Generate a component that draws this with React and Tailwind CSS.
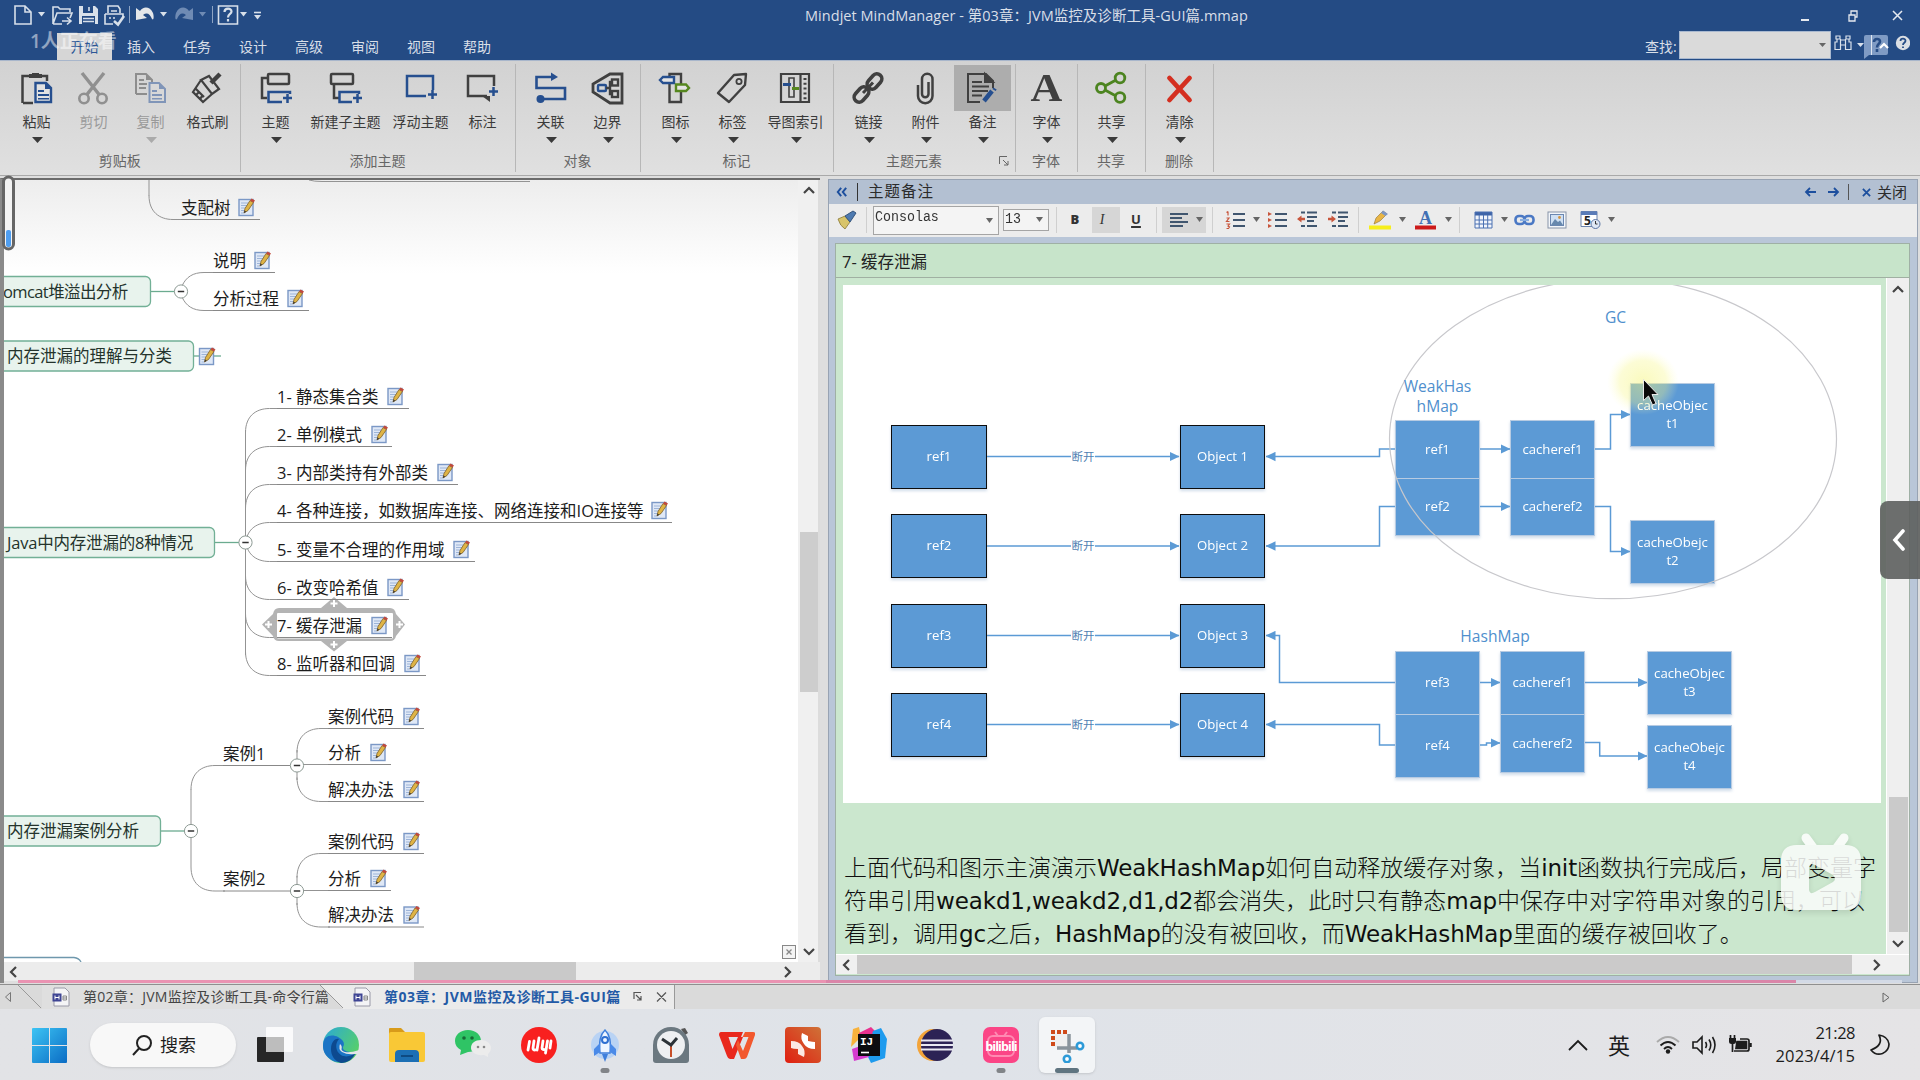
import React from "react";

const UI = "font-['Open_Sans','Noto_Sans_CJK_SC',sans-serif]";

/* ---------- small shared pieces ---------- */

function Caret({ className = "text-[#444]", w = 8, h = 5 }) {
  return (
    <svg width={w} height={h} viewBox="0 0 8 5" preserveAspectRatio="none" className={"shrink-0 " + className}>
      <path d="M0 0H8L4 5Z" fill="currentColor" />
    </svg>
  );
}

function Chevron({ d, className = "text-[#444]" }) {
  const paths = { up: "M1 8L6 3L11 8", down: "M1 4L6 9L11 4", left: "M8 1L3 6L8 11", right: "M4 1L9 6L4 11" };
  return (
    <svg width="12" height="12" viewBox="0 0 12 12" className={"shrink-0 " + className}>
      <path d={paths[d]} fill="none" stroke="currentColor" strokeWidth="2.2" />
    </svg>
  );
}

/* ---------- title bar ---------- */

function QuickAccess() {
  return (
    <svg width="280" height="30" viewBox="0 0 280 30" className="shrink-0" fill="none" stroke="#d8e0ea" strokeWidth="1.6">
      <path d="M15 5H25L31 11V23H15ZM25 5V11H31" />
      <path d="M38 11H45L41.500 15.500Z" fill="#d8e0ea" stroke="none" />
      <path d="M53 23V6H58L60 8H70V11M53 23L57 12H72L70 17M53 23H62M62 20H70M67 16.500L71 20L67 23.500" />
      <path d="M79 5H95L98 8V23H79Z" fill="#d8e0ea" stroke="none" />
      <path d="M83 5H93V12H83ZM82 15H95V23H82Z" fill="#244b84" stroke="none" />
      <path d="M89 6V10M83 17.500H94M83 20.500H94" />
      <path d="M108 12V5H118L120 8V12M105 13H123V17M105 13V23H113M111 10H117M109 17H111M113 17H115" />
      <path d="M114 20L118 23.500L124 15" strokeWidth="2.600" />
      <path d="M129.500 5V22M212.500 5V22" stroke="#8ea4c4" strokeWidth="1" />
      <path d="M136 7V19L147 17L143 14C147 11 150 13 152 18C154 20 154 15 153 12C150 5 143 5 140 10Z" fill="#e4e7ea" stroke="none" />
      <path d="M160 11H167L163.500 15.500Z" fill="#d8e0ea" stroke="none" />
      <path d="M193 7V19L182 17L186 14C182 11 179 13 177 18C175 20 175 15 176 12C179 5 186 5 189 10Z" fill="#6f8bb4" stroke="none" />
      <path d="M199 11H206L202.500 15.500Z" fill="#6f8bb4" stroke="none" />
      <path d="M218.500 5H237.500V23H218.500Z" />
      <path d="M224.500 11C224.500 6.500 231.500 6.500 231.500 10.500C231.500 13 228 13 228 16.500M228 18V20.500" strokeWidth="2.200" />
      <path d="M240 11H247L243.500 15.500Z" fill="#d8e0ea" stroke="none" />
      <path d="M254 11.500H261" />
      <path d="M254 14H261L257.500 18.500Z" fill="#d8e0ea" stroke="none" />
    </svg>
  );
}

function Header() {
  const tabs = ["插入", "任务", "设计", "高级", "审阅", "视图", "帮助"];
  return (
    <header className="relative flex h-[60px] shrink-0 flex-col bg-[#244b84] text-[#d9dfe8]">
      <div className="flex h-[31px] items-center">
        <QuickAccess />
        <div className="ml-[525px] whitespace-nowrap text-[14.500px] tracking-[0.040px]">
          Mindjet MindManager - 第03章：JVM监控及诊断工具-GUI篇.mmap
        </div>
        <div className="ml-auto flex items-center gap-[38px] pr-[17px]">
          <svg width="10" height="12" viewBox="0 0 10 12"><path d="M1 10H9" stroke="#e6eaf0" strokeWidth="2" /></svg>
          <svg width="10" height="12" viewBox="0 0 10 12" className="-mr-[4px]" fill="none" stroke="#e6eaf0" strokeWidth="1.300"><path d="M1 5H7V11H1ZM3 5V1H9V7H7" /></svg>
          <svg width="11" height="11" viewBox="0 0 11 11"><path d="M1 1L10 10M10 1L1 10" stroke="#e6eaf0" strokeWidth="1.500" /></svg>
        </div>
      </div>
      <div className="flex h-[29px] text-[14px] leading-[31px]">
        <div className="mt-[2px] ml-[57px] w-[55px] bg-[#d6d6d6] text-center leading-[27px] text-[#2c5796]">开始</div>
        <div className="ml-[1px] flex">
          {tabs.map((t) => (
            <div key={t} className="w-[56px] text-center">{t}</div>
          ))}
        </div>
        <div className="ml-auto flex pr-[10px]">
          <div className="w-[34px]">查找:</div>
          <div className="flex h-[28px] w-[152px] items-center justify-end border border-[#a9b9d0] bg-[#dadada] pr-[4px]">
            <Caret w={7} h={4} className="text-[#666]" />
          </div>
          <svg width="79" height="29" viewBox="0 0 79 29" fill="none" stroke="#d9e1ec">
            <path d="M5 5H9V8H5ZM15 5H19V8H15ZM6 8V11H4V18.500H9.500V8M18 8V11H20V18.500H14.500V8M9.500 9H14.500M9.500 14H14.500" strokeWidth="1.200" />
            <path d="M26 12H33L29.500 16Z" fill="#d9e1ec" stroke="none" />
            <path d="M33 6Q33 4 35 4H55Q57 4 57 6V22Q57 24 55 24H38L33 28Z" fill="#7f9bc4" stroke="none" />
            <path d="M40.500 4V24" stroke="#dfe6f0" strokeWidth="1" />
            <path d="M43 11C43 7 49 7 49 10.500C49 13 46 13 46 16.500M46 18V21" stroke="#274d86" strokeWidth="2.600" />
            <path d="M49 17L53 13L57 17" stroke="#fff" strokeWidth="2.200" />
            <circle cx="72" cy="12" r="7.200" fill="#dbdfe4" stroke="none" />
            <path d="M69.500 10C69.500 7 74.500 7 74.500 9.800C74.500 12 72 11.500 72 14M72 15.500V17" stroke="#274d86" strokeWidth="1.800" />
          </svg>
        </div>
      </div>
      <div className="absolute top-[28px] left-[30px] text-[19px] leading-[26px] font-semibold text-white/50">1人正在看</div>
    </header>
  );
}

/* ---------- ribbon ---------- */

const K = "#404040";
const B = "#264f8f";
const ICONS = {
  paste: (<g><path d="M5 33H15M4.500 33V6H29V11" fill="none" stroke={K} strokeWidth="2.500" /><path d="M11 8V4H14V3H21V4H24V8Z" fill={K} /><path d="M17.500 13H28L33 18V32H17.500Z" fill="#e2e2e2" stroke={B} strokeWidth="2.400" /><path d="M27 12L34 19H27ZM20 20H26V22H20ZM20 24H31V26H20ZM20 28H31V29.500H20Z" fill={B} /></g>),
  cut: (<g fill="none" stroke="#909090" strokeWidth="2.600"><circle cx="9" cy="28.500" r="4.700" /><circle cx="27" cy="28.500" r="4.700" /><path d="M7 3L24.500 25M29 3L11.500 25" strokeWidth="3.400" /></g>),
  copy: (<g><path d="M4 24V4H14L20 10V12M4 24H15" fill="none" stroke="#8d8d8d" strokeWidth="2" /><path d="M14 4L20 10H14ZM7 9H12V11H7ZM7 13H15V15H7ZM7 17H14V19H7Z" fill="#8d8d8d" /><path d="M17.500 13H27L33 19V32H17.500Z" fill="#d8d8d8" stroke="#8095b8" strokeWidth="2" /><path d="M27 13L33 19H27ZM20 20H25V22H20ZM20 24H30V26H20ZM20 28H30V29.500H20Z" fill="#8095b8" /></g>),
  brush: (<g fill="none" stroke={K} strokeWidth="2.200"><path d="M12 10L20 6L30 19L23 24ZM12 10L4 22L14 32L23 24M7 19L15 27M11 29L14 25M7 25L10 22" /><path d="M22 13L31 4" strokeWidth="4.500" /></g>),
  topic: (<g fill="none" strokeWidth="2.500"><rect x="11" y="4" width="21" height="10" rx="1" stroke={K} /><path d="M11 8H5V28H10" stroke={K} /><path d="M25 32H11.500V22H33V24M26 28H35M30.500 24V33" stroke={B} /></g>),
  sub: (<g fill="none" strokeWidth="2.500"><rect x="4" y="4" width="22" height="10" rx="1" stroke={K} /><path d="M7 14V28H12" stroke={K} /><path d="M25 32H12.500V22H32V24M26 28H35M30.500 24V33" stroke={B} /></g>),
  float: (<g fill="none" stroke={B} strokeWidth="2.500"><path d="M24 26H5V6H31V20M26 24.500H35M30.500 20V29" /></g>),
  callout: (<g fill="none" strokeWidth="2.500"><path d="M23 26H4V6H30V16" stroke={K} /><path d="M18 26H26V32Z" fill={K} /><path d="M25 21.500H34M29.500 17V26" stroke={B} /></g>),
  relate: (<g fill="none" stroke={B} strokeWidth="2.600"><path d="M20 7H4.500V18H33V29H9" /><path d="M19 2.500L26 7L19 11Z" fill={B} stroke="none" /><circle cx="8.500" cy="29" r="4" fill={B} stroke="none" /></g>),
  bound: (<g fill="none" strokeWidth="2.400"><path d="M33 4H21L4 14V22L21 33H33Z" stroke={K} strokeWidth="2.800" /><rect x="9" y="15" width="8" height="6" rx="1" stroke={B} /><path d="M17 18H21M21 18V12H23M21 18V24H23" stroke={K} /><rect x="23" y="9.500" width="6" height="6" stroke={K} /><rect x="23" y="21" width="6" height="6" stroke={K} /></g>),
  marker: (<g fill="#e4e4e4" strokeWidth="2.400"><path d="M12.500 4H24V32H12.500Z" fill="none" stroke={K} /><path d="M3 10L6 7H17V13H6Z" stroke={B} /><path d="M32 18L29 14.500H19V21H29Z" stroke="#56871f" /></g>),
  tag: (<g fill="none" stroke={K} strokeWidth="2.400"><path d="M4 23L20 5L32 4L31 15L15 32Z" strokeLinejoin="round" /><circle cx="25" cy="11.500" r="2.600" strokeWidth="1.800" /></g>),
  index: (<g fill="none" stroke={K} strokeWidth="2.200"><path d="M4 4H32V32H4ZM23.500 4V32" /><path d="M28 8V30" strokeWidth="3" strokeDasharray="2 2.800" /><path d="M12 8H17V27H12Z" strokeWidth="1.600" /><path d="M6 13H14V16H6Z" fill={B} stroke="none" /><path d="M15 17H22V20H15Z" fill="#56871f" stroke="none" /></g>),
  link: (<g fill="none" stroke={K} strokeWidth="3.600"><rect x="16" y="6.500" width="17" height="10" rx="5" transform="rotate(-48 24.500 11.500)" /><rect x="3" y="19.500" width="17" height="10" rx="5" transform="rotate(-48 11.500 24.500)" /><path d="M13 23L23 12.500" strokeWidth="3" /></g>),
  clip: (<path d="M11 15V26A7 7 0 0 0 25.500 26V9A5.200 5.200 0 0 0 15 9V24A3.200 3.200 0 0 0 21.500 24V12" fill="none" stroke={K} strokeWidth="2.500" />),
  note: (<g fill="none" stroke={K} strokeWidth="2"><path d="M16 32H4V4H22L29 11V18" /><path d="M21 4L29 12H21Z" fill={K} /><path d="M8 12H18M8 16.500H25M8 21H24M8 25.500H18" strokeWidth="1.800" /><path d="M20 31L28 21" stroke={B} strokeWidth="4.500" /><path d="M30 20L31 18.500" stroke={B} strokeWidth="4" /></g>),
  share: (<g fill="none" stroke="#4c8420" strokeWidth="2.800"><circle cx="8" cy="18" r="4.500" /><circle cx="27" cy="8" r="4.800" /><circle cx="27" cy="27.500" r="4.800" /><path d="M12 16L23 10M12 20L23 26" /></g>),
  clear: (<path d="M8.500 8L28.500 30M28.500 8L8.500 30" fill="none" stroke="#d42f20" strokeWidth="4.800" strokeLinecap="round" />),
};

const GROUPS = [
  { label: "剪贴板", w: "w-[240.500px]", pl: "pl-[8px]", items: [["paste", "粘贴", "w-[57px]", 1], ["cut", "剪切", "w-[57px]", 0, 1], ["copy", "复制", "w-[57px]", 1, 1], ["brush", "格式刷", "w-[57px]", 0]] },
  { label: "添加主题", w: "w-[275px]", pl: "pl-[6.500px]", items: [["topic", "主题", "w-[57px]", 1], ["sub", "新建子主题", "w-[83px]", 0], ["float", "浮动主题", "w-[67px]", 0], ["callout", "标注", "w-[57px]", 0]] },
  { label: "对象", w: "w-[125px]", pl: "pl-[6.500px]", items: [["relate", "关联", "w-[57px]", 1], ["bound", "边界", "w-[57px]", 1]] },
  { label: "标记", w: "w-[193px]", pl: "pl-[6.500px]", items: [["marker", "图标", "w-[57px]", 1], ["tag", "标签", "w-[57px]", 1], ["index", "导图索引", "w-[69px]", 1]] },
  { label: "主题元素", w: "w-[182px]", pl: "pl-[6.500px]", items: [["link", "链接", "w-[57px]", 1], ["clip", "附件", "w-[57px]", 1], ["note", "备注", "w-[57px]", 1, 0, 1]], launch: 1 },
  { label: "字体", w: "w-[62px]", pl: "pl-[3px]", items: [["font", "字体", "w-[56px]", 1]] },
  { label: "共享", w: "w-[68px]", pl: "pl-[6px]", items: [["share", "共享", "w-[56px]", 1]] },
  { label: "删除", w: "w-[68px]", pl: "pl-[6px]", items: [["clear", "清除", "w-[56px]", 1]] },
];

function Ribbon() {
  return (
    <div className="flex h-[116px] shrink-0 border-t border-b border-t-[#a8b6cb] border-b-[#a9a9a9] bg-linear-to-b from-[#d2d2d2] to-[#e0e0e0] pt-[3px] pb-[3px]">
      {GROUPS.map((g) => (
        <section key={g.label} className={"relative flex shrink-0 flex-col border-r border-[#b7b7b7] " + g.w}>
          <div className={"flex " + g.pl}>
            {g.items.map(([id, label, w, caret, dim, on]) => (
              <div key={label} className={"flex h-[86px] shrink-0 flex-col items-center " + w}>
                <div className={"mt-[1px] flex h-[46px] w-full items-center justify-center pr-[2px] " + (on ? "bg-[#adadad]" : "")}>
                  {id === "font" ? (
                    <span className="-mt-[1px] ml-[2px] scale-x-110 font-['Liberation_Serif',serif] text-[40px] leading-[40px] font-bold text-[#404040]">A</span>
                  ) : (
                    <svg width="36" height="36" viewBox="0 0 36 36">{ICONS[id]}</svg>
                  )}
                </div>
                <div className={"mt-[1px] h-[20px] text-[14px] leading-[20px] whitespace-nowrap " + (dim ? "text-[#999]" : "text-[#3a3a3a]")}>{label}</div>
                {caret ? <Caret w={11} h={6} className={"mt-[5px] ml-[1px] " + (dim ? "text-[#aaa]" : "text-[#3a3a3a]")} /> : null}
              </div>
            ))}
          </div>
          <div className={"text-center text-[14px] leading-[22px] text-[#666] " + (g.launch ? "pr-[20px]" : "")}>{g.label}</div>
          {g.launch ? (
            <svg width="10" height="10" viewBox="0 0 10 10" className="absolute right-[6px] bottom-[6px]" fill="none" stroke="#666"><path d="M.5 8V.5H8M4 4L9 9M9 5V9H5" /></svg>
          ) : null}
        </section>
      ))}
    </div>
  );
}

/* ---------- mind map ---------- */

function NoteIcon({ x, y }) {
  return (
    <g transform={`translate(${x} ${y})`}>
      <rect x="1" y="1.500" width="14" height="16" fill="#dfe8f6" stroke="#7b98c6" strokeWidth="1.400" />
      <path d="M3 5H10M3 7.500H9M3 10H8M3 12.500H7M3 15H6" stroke="#9db4d8" strokeWidth="1" />
      <path d="M6 15L7 10.500L12 2.500L15.500 4.500L10 12.500Z" fill="#dfb445" stroke="#7c6029" strokeWidth=".8" />
      <path d="M12 2.500L13.500 .5L17 2.500L15.500 4.500Z" fill="#c24a3c" />
      <path d="M6 15L6.500 12.500L8.300 13.700Z" fill="#333" />
    </g>
  );
}

function Toggle({ x, y }) {
  return (
    <g>
      <circle cx={x} cy={y} r="6.600" fill="#fff" stroke="#8d9a94" />
      <path d={`M${x - 3.2} ${y}H${x + 3.2}`} stroke="#333" strokeWidth="1.500" />
    </g>
  );
}

/* t: label, x: text start, y: underline, r: underline end, i: note icon x */
const LEAVES = [
  { t: "支配树", x: 181, y: 219.5, r: 260, i: 238 },
  { t: "说明", x: 213, y: 272.5, r: 275, i: 254 },
  { t: "分析过程", x: 213, y: 310.5, r: 309, i: 287 },
  { t: "1- 静态集合类", x: 277, y: 408.5, r: 409, i: 387 },
  { t: "2- 单例模式", x: 277, y: 446.5, r: 392, i: 371 },
  { t: "3- 内部类持有外部类", x: 277, y: 484.5, r: 458, i: 437 },
  { t: "4- 各种连接，如数据库连接、网络连接和IO连接等", x: 277, y: 522.5, r: 672, i: 651 },
  { t: "5- 变量不合理的作用域", x: 277, y: 561.5, r: 475, i: 453 },
  { t: "6- 改变哈希值", x: 277, y: 599.5, r: 409, i: 387 },
  { t: "7- 缓存泄漏", x: 277, y: 637.5, r: 392, i: 371 },
  { t: "8- 监听器和回调", x: 277, y: 675.5, r: 426, i: 404 },
  { t: "案例代码", x: 328, y: 728.5, r: 424, i: 403 },
  { t: "分析", x: 328, y: 764.5, r: 391, i: 370 },
  { t: "解决办法", x: 328, y: 801.5, r: 424, i: 403 },
  { t: "案例1", x: 223, y: 765.5, r: 290 },
  { t: "案例代码", x: 328, y: 853.5, r: 424, i: 403 },
  { t: "分析", x: 328, y: 890.5, r: 391, i: 370 },
  { t: "解决办法", x: 328, y: 927, r: 424, i: 403 },
  { t: "案例2", x: 223, y: 891, r: 290 },
];

const TOPICS = [
  { t: "omcat堆溢出分析", x: 3, y: 291.5, r: 150.5, to: 175, tight: -0.6 },
  { t: "内存泄漏的理解与分类", x: 7, y: 356, r: 193.5, to: 221 },
  { t: "Java中内存泄漏的8种情况", x: 7, y: 542.5, r: 214.5, to: 239, tight: -0.2 },
  { t: "内存泄漏案例分析", x: 7, y: 831, r: 160.5, to: 184 },
];

const up = (x, y, x2) => `M${x} ${y + 24}C${x} ${y + 8} ${x + 10} ${y} ${x + 24} ${y}H${x2}`;
const down = (x, y, x2) => `M${x} ${y - 24}C${x} ${y - 8} ${x + 10} ${y} ${x + 24} ${y}H${x2}`;

function MapCanvas() {
  return (
    <svg width="794" height="782" viewBox="4 180 794 782" className="block bg-linear-to-b from-[#ededed] from-0% via-white via-[12%] to-white" fontSize="16.500">
      <g fill="none" stroke="#939393">
        <path d="M149 180V196M309 180Q314 181.500 322 181.500H530" />
        <path d={down(149, 219.5, 182)} />
        <path d="M182 286C186 277 193 272.500 204 272.500H214M182 297C186 306 193 310.500 204 310.500H214" />
        <path d="M245.500 430V655" />
        {[408.5, 446.5, 484.5, 522.5].map((y) => <path key={y} d={up(245.5, y, 278)} />)}
        {[561.5, 599.5, 637.5, 675.5].map((y) => <path key={y} d={down(245.5, y, 278)} />)}
        <path d="M191 789V867" />
        <path d={up(191, 765.5, 225)} />
        <path d={down(191, 891, 225)} />
        <path d="M297 750V780M297 876V905M297 764.500H330M297 890.500H330" />
        <path d={up(297, 728.5, 330)} />
        <path d={down(297, 801.5, 330)} />
        <path d={up(297, 853.5, 330)} />
        <path d={down(297, 927, 330)} />
      </g>

      <g>
        <path d="M273 614Q274 608 279 608H321L334 597L347 608H390Q395 608 396 614L405 624.500L396 636Q395 641 390 641H347L334 651.500L321 641H279Q274 641 273 636L262 624.500Z" fill="#b4b4b4" />
        <rect x="277" y="613" width="116" height="25.500" rx="1" fill="#fff" />
        <path d="M334 600V607M330.500 603.500H337.500M334 641V648M330.500 644.500H337.500M268.500 621V628M265 624.500H272M399.500 621V628M396 624.500H403" stroke="#fff" strokeWidth="2" />
      </g>

      {LEAVES.map((n, k) => (
        <g key={k}>
          <path d={`M${n.x} ${n.y}H${n.r}`} stroke="#888" />
          <text x={n.x} y={n.y - 5.7} fill="#1c1c1c">{n.t}</text>
          {n.i ? <NoteIcon x={n.i} y={n.y - 21.5} /> : null}
        </g>
      ))}

      {TOPICS.map((n) => (
        <g key={n.t}>
          <path d={`M${n.r} ${n.y}H${n.to}`} stroke="#6bab90" strokeWidth="1.300" />
          <rect x="-20" y={n.y - 15} width={n.r + 20} height="30" rx="5" fill="#e8f3ed" stroke="#72b096" strokeWidth="1.300" />
          <text x={n.x} y={n.y + 6} fill="#24332c" letterSpacing={n.tight || 0}>{n.t}</text>
        </g>
      ))}
      <NoteIcon x={198.5} y={347} />
      <Toggle x={181} y={291.5} />
      <Toggle x={245.5} y={542.5} />
      <Toggle x={191} y={831} />
      <Toggle x={297} y={765.5} />
      <Toggle x={297} y={891} />
      <path d="M0 957.500H74Q79 958 81 962" fill="none" stroke="#6f98ad" strokeWidth="1.300" />
      <g fill="none" stroke="#888"><rect x="782.500" y="945.500" width="13" height="13" fill="#f4f4f4" /><path d="M786.500 949.500L791.500 954.500M791.500 949.500L786.500 954.500" strokeWidth="1.300" /></g>
    </svg>
  );
}

function MapPanel() {
  return (
    <div className="flex w-[820px] shrink-0 flex-col border-t-2 border-l-[4px] border-t-[#6b6b6b] border-l-[#8a8a8a]">
      <div className="flex h-[782px]">
        <MapCanvas />
        <div className="flex w-[20px] flex-col items-center bg-[#f0f0f0] py-[5px] pl-px">
          <Chevron d="up" />
          <div className="mt-[335px] h-[160px] w-[18px] bg-[#cdcdcd]" />
          <Chevron d="down" className="mt-auto text-[#444]" />
        </div>
        <div className="w-[2px] bg-[#dcdcdc]" />
      </div>
      <div className="flex h-[19px] items-center bg-[#ececec] pl-[4px]">
        <Chevron d="left" />
        <div className="ml-[394px] h-[19px] w-[162px] bg-[#c9c9c9]" />
        <Chevron d="right" className="ml-[205px] text-[#444]" />
      </div>
    </div>
  );
}

/* ---------- notes panel ---------- */

function Sep() {
  return <div className="h-[26px] w-px shrink-0 bg-[#cfcfcf]" />;
}

const R = "#c8563c";
const L = "#40566f";
const TOOL = {
  painter: (<g><path d="M2 9L9 6L14 12L9 19Q4 16 2 9Z" fill="#d8c46a" stroke="#8a7a3a" strokeWidth=".8" /><path d="M9 6L17 1L20 3L14 12Z" fill="#4e7ab0" stroke="#35557d" /></g>),
  align: <path d="M1 4H19M1 8H13M1 12H19M1 16H14" stroke={L} strokeWidth="1.900" />,
  num: (<g><path d="M8 4H20M8 10H20M8 16H20" stroke={L} strokeWidth="1.900" /><path d="M3 1.500V5.500M1.500 2.500L3 1.500M1.500 8H4L1.500 11.500H4.500M1.500 14H4.500L3 16L4.500 17L3.500 18.500H1.500" fill="none" stroke={R} strokeWidth="1.200" /></g>),
  bul: (<g><path d="M8 4H20M8 10H20M8 16H20" stroke={L} strokeWidth="1.900" /><path d="M1 2L5 4L1 6ZM1 8L5 10L1 12ZM1 14L5 16L1 18Z" fill={R} /></g>),
  out: (<g><path d="M4 2.500H8M10 2.500H20M10 7H20M10 11H17M4 16H8M10 16H20" stroke={L} strokeWidth="2.100" /><path d="M0 9L4.500 5.500V7.800H8V10.200H4.500V12.500Z" fill={R} /></g>),
  ind: (<g><path d="M4 2.500H8M10 2.500H20M10 7H20M10 11H17M4 16H8M10 16H20" stroke={L} strokeWidth="2.100" /><path d="M8 9L3.500 5.500V7.800H0V10.200H3.500V12.500Z" fill={R} /></g>),
  hi: (<g><path d="M0 15.500H22V19.500H0Z" fill="#f6ee1c" /><path d="M5 14L7 8L14 1L18 4L11 11Z" fill="#e9b544" stroke="#8f7433" strokeWidth=".6" /><path d="M12 3L14 .5L19 4L16.500 6Z" fill="#7d97c4" /></g>),
  col: (<g><path d="M0 15.500H21V19.500H0Z" fill="#cc1a1a" /><text x="10.500" y="14" textAnchor="middle" fontSize="18" fontWeight="700" fontFamily="Liberation Serif, serif" fill="#4270b4">A</text></g>),
  table: (<g><path d="M1 2H18V18H1Z" fill="#f2f5fb" /><path d="M1 2H18V5.500H1Z" fill="#3e64a8" /><path d="M1 2H18V18H1ZM1 10H18M1 14H18M5.200 5V18M9.500 5V18M13.700 5V18" fill="none" stroke="#4a70b2" /></g>),
  chain: (<g fill="none" stroke="#4a78c4" strokeWidth="2.600"><rect x="1.500" y="6" width="9" height="8" rx="3.500" /><rect x="10.500" y="6" width="9" height="8" rx="3.500" /><path d="M6 10H15" stroke="#89aee0" strokeWidth="2.200" /></g>),
  pic: (<g><rect x="1" y="2" width="18" height="16" fill="#f3f6fa" stroke="#8794a8" /><rect x="3.500" y="4.500" width="13" height="11" fill="#cfe0f3" stroke="#6b87b0" /><path d="M4 15L8 9L11 12L13 10.500L16 15Z" fill="#6788ad" /><circle cx="12.500" cy="7.500" r="1.400" fill="#d59440" /></g>),
  date: (<g><path d="M1 1.500H17V16.500H1Z" fill="#fff" stroke="#6b83ad" /><path d="M1 1.500H17V5H1Z" fill="#5a7cb8" /><text x="7.500" y="15" textAnchor="middle" fontSize="12" fontWeight="700" fill="#222">5</text><circle cx="15.500" cy="14" r="4.500" fill="#dfe8f5" stroke="#5a74a3" /><path d="M15.500 11V14H17.500" fill="none" stroke="#333" /></g>),
};

function Tool({ id, className = "" }) {
  return <svg width="22" height="20" viewBox="0 0 22 20" className={"shrink-0 overflow-visible " + className}>{TOOL[id]}</svg>;
}

function NotesToolbar() {
  const c = "text-[#666] ";
  return (
    <div className="flex h-[33px] items-center bg-[#ececec] pb-[2px] pl-[7px] text-[#333]">
      <Tool id="painter" />
      <div className="ml-[8px]"><Sep /></div>
      <div className="mt-[2px] ml-[6px] flex h-[29px] w-[126px] items-end justify-between border border-[#a5a5a5] bg-[#f4f4f4] pr-[5px] pl-[1px]">
        <span className="mb-auto origin-left scale-y-110 font-['Liberation_Mono',monospace] text-[13.300px] leading-[21px]">Consolas</span>
        <Caret w={7} h={5} className={c + "mb-[11px]"} />
      </div>
      <div className="ml-[4px] flex h-[22px] w-[46px] items-center justify-between border border-[#a5a5a5] bg-[#f4f4f4] pr-[5px] pl-[1px]">
        <span className="scale-y-110 font-['Liberation_Mono',monospace] text-[13.300px]">13</span>
        <Caret w={7} h={5} className={c} />
      </div>
      <div className="ml-[7px]"><Sep /></div>
      <div className="ml-[10px] w-[16px] text-center text-[13px] font-extrabold">B</div>
      <div className="ml-[9px] flex h-[26px] w-[28px] items-center justify-center bg-[#d6d6d6] pr-[8px] font-['Liberation_Serif',serif] text-[14px] italic">I</div>
      <div className="ml-[8px] w-[16px] text-center text-[13px] font-bold underline decoration-2 underline-offset-2">U</div>
      <div className="ml-[12px]"><Sep /></div>
      <div className="ml-[5px] flex h-[26px] w-[44px] items-center bg-[#d6d6d6] pl-[7px]">
        <Tool id="align" />
        <Caret w={7} h={5} className={c + "ml-[5px]"} />
      </div>
      <div className="ml-[6px]"><Sep /></div>
      <Tool id="num" className="ml-[12px]" /><Caret w={7} h={5} className={c + "ml-[6px]"} />
      <Tool id="bul" className="ml-[7px]" />
      <Tool id="out" className="ml-[8px]" />
      <Tool id="ind" className="ml-[9px]" />
      <div className="ml-[8px]"><Sep /></div>
      <Tool id="hi" className="ml-[10px]" /><Caret w={7} h={5} className={c + "ml-[8px]"} />
      <Tool id="col" className="ml-[9px]" /><Caret w={7} h={5} className={c + "ml-[8px]"} />
      <div className="ml-[7px]"><Sep /></div>
      <Tool id="table" className="ml-[14px]" /><Caret w={7} h={5} className={c + "ml-[5px]"} />
      <Tool id="chain" className="ml-[6px]" />
      <Tool id="pic" className="ml-[11px]" />
      <Tool id="date" className="ml-[11px]" /><Caret w={7} h={5} className={c + "ml-[6px]"} />
    </div>
  );
}

const BLUE = "#5b9ad5";

function Box({ x, y, w, h, dark, lines }) {
  const cy = y + h / 2;
  return (
    <g>
      <rect x={x} y={y} width={w} height={h} fill={BLUE} stroke={dark ? "#0c0c0c" : "#b7cbe2"} />
      {lines.map((l, i) => (
        <text key={l} x={x + w / 2} y={cy + 4 + (i - (lines.length - 1) / 2) * 18} fill="#fff" textAnchor="middle">{l}</text>
      ))}
    </g>
  );
}

const ROWS = [[425.5, 456.5], [514.5, 546], [604.5, 635.5], [693.5, 724.5]];

function Diagram() {
  return (
    <svg width="1038" height="518" viewBox="843 285 1038 518" className="block bg-white font-['Open_Sans','Noto_Sans_CJK_SC',sans-serif]" fontSize="13.200">
      <defs>
        <marker id="tip" viewBox="0 0 10 10" refX="9.500" refY="5" markerWidth="10" markerHeight="10" markerUnits="userSpaceOnUse" orient="auto">
          <path d="M0 .3L10 5L0 9.700Z" fill={BLUE} />
        </marker>
        <filter id="soft" x="-5%" y="-5%" width="110%" height="115%">
          <feDropShadow dx="0" dy="2" stdDeviation="1.500" floodColor="#7d9cc4" floodOpacity="0.350" />
        </filter>
        <radialGradient id="spot">
          <stop offset="0" stopColor="#f5f57a" stopOpacity=".5" />
          <stop offset=".65" stopColor="#f7f78a" stopOpacity=".35" />
          <stop offset="1" stopColor="#ffffc0" stopOpacity="0" />
        </radialGradient>
      </defs>
      <g fill="none" stroke={BLUE} strokeWidth="1.500">
        {ROWS.map(([, y]) => <path key={y} d={`M987 ${y}H1179`} markerEnd="url(#tip)" />)}
        <path d="M1395 449H1379.500V456.500H1266" markerEnd="url(#tip)" />
        <path d="M1395 506.500H1379.500V546H1266" markerEnd="url(#tip)" />
        <path d="M1395 682.500H1279.500V635.500H1266" markerEnd="url(#tip)" />
        <path d="M1395 745H1379.500V724.500H1266" markerEnd="url(#tip)" />
        <path d="M1480 449H1510" markerEnd="url(#tip)" />
        <path d="M1480 506.500H1510" markerEnd="url(#tip)" />
        <path d="M1595 449H1610.500V414.500H1630" markerEnd="url(#tip)" />
        <path d="M1595 506.500H1610.500V551.500H1630" markerEnd="url(#tip)" />
        <path d="M1480 682.500H1500" markerEnd="url(#tip)" />
        <path d="M1480 745H1486.500V743H1500" markerEnd="url(#tip)" />
        <path d="M1585 682.500H1647" markerEnd="url(#tip)" />
        <path d="M1585 742.500H1599.700V756H1647" markerEnd="url(#tip)" />
      </g>
      {ROWS.map(([, y]) => (
        <g key={y}>
          <rect x="1071" y={y - 7} width="24" height="14" fill="#fff" />
          <text x="1083" y={y + 4} textAnchor="middle" fontSize="11.500" fill="#4f7fb2">断开</text>
        </g>
      ))}
      <g filter="url(#soft)">
        {ROWS.map(([y], i) => (
          <g key={y}>
            <Box x={891.5} y={y} w={95} h={63} dark lines={["ref" + (i + 1)]} />
            <Box x={1180.5} y={y} w={84} h={63} dark lines={["Object " + (i + 1)]} />
          </g>
        ))}
        <Box x={1395.5} y={420.5} w={84} h={58} lines={["ref1"]} />
        <Box x={1395.5} y={478.5} w={84} h={57} lines={["ref2"]} />
        <Box x={1510.5} y={420.5} w={84} h={58} lines={["cacheref1"]} />
        <Box x={1510.5} y={478.5} w={84} h={57} lines={["cacheref2"]} />
        <Box x={1630.5} y={383.5} w={84} h={63} lines={["cacheObjec", "t1"]} />
        <Box x={1630.5} y={520.5} w={84} h={63} lines={["cacheObejc", "t2"]} />
        <Box x={1395.5} y={651.5} w={84} h={63} lines={["ref3"]} />
        <Box x={1395.5} y={714.5} w={84} h={63} lines={["ref4"]} />
        <Box x={1500.5} y={651.5} w={84} h={63} lines={["cacheref1"]} />
        <Box x={1500.5} y={714.5} w={84} h={58} lines={["cacheref2"]} />
        <Box x={1647.5} y={651.5} w={84} h={63} lines={["cacheObjec", "t3"]} />
        <Box x={1647.5} y={725.5} w={84} h={63} lines={["cacheObejc", "t4"]} />
      </g>
      <ellipse cx="1613" cy="438.700" rx="223.500" ry="160" fill="none" stroke="#c8c8cc" strokeWidth="1.200" />
      <g fill="#4f8fcd" textAnchor="middle" fontSize="15.600">
        <text x="1615.500" y="323">GC</text>
        <text x="1437.500" y="391.500">WeakHas</text>
        <text x="1437.500" y="412">hMap</text>
        <text x="1495" y="642">HashMap</text>
      </g>
      <ellipse cx="1643" cy="382" rx="36" ry="33" fill="url(#spot)" />
      <path d="M1643.500 379.500V400.500L1648.500 396L1652.500 405L1656 403.500L1652 394.500H1658Z" fill="#0a0a0a" stroke="#e9e9e9" strokeWidth="1" />
    </svg>
  );
}

/* Latin runs are set in a heavier weight than the surrounding Chinese. */
function Mixed({ children }) {
  return (
    <p>
      {children.split(/([A-Za-z0-9,]+)/).map((part, i) => (i % 2 ? <span key={i} className="font-normal tracking-[-0.120px]">{part}</span> : part))}
    </p>
  );
}

function NotesPanel() {
  return (
    <div className="mt-px ml-[8px] flex w-[1090px] shrink-0 flex-col border border-[#98a3b3] bg-[#b9c6d8]">
      <div className="flex h-[24px] shrink-0 items-center bg-[#b3c0d2] text-[15px] text-[#2b2b2b]">
        <svg width="12" height="10" viewBox="0 0 14 12" className="ml-[7px]" fill="none" stroke="#1d4f9e" strokeWidth="2.400"><path d="M6 1L2 6L6 11M12 1L8 6L12 11" /></svg>
        <div className="ml-[9px] h-[18px] w-px bg-[#333]" />
        <div className="ml-[10px] text-[15.500px] tracking-[1px]">主题备注</div>
        <svg width="58" height="18" viewBox="0 0 58 18" className="ml-auto" fill="none" stroke="#1d4f9e" strokeWidth="1.800"><path d="M12 9H2M6 5L2 9L6 13M24 9H34M30 5L34 9L30 13" /><path d="M44.500 1V17" stroke="#555" strokeWidth="1" /></svg>
        <svg width="9" height="9" viewBox="0 0 10 10"><path d="M1 1L9 9M9 1L1 9" stroke="#1d4f9e" strokeWidth="2" /></svg>
        <div className="mr-[10px] ml-[6px]">关闭</div>
      </div>
      <NotesToolbar />
      <div className="mt-[6px] ml-[6px] flex h-[733px] w-[1075px] flex-col border border-[#9fb0a5] bg-[#cbe7ce]">
        <div className="h-[34px] shrink-0 border-b border-[#a0b0a2] bg-[#c7e4ca] pl-[6px] text-[16.500px] leading-[36px] text-[#222]">7- 缓存泄漏</div>
        <div className="flex h-[676px]">
          <div className="w-[1050px] shrink-0 pt-[7px] pl-[7px]">
            <Diagram />
            <div className="mt-[49px] flex flex-col pl-px font-['DejaVu_Sans','Noto_Sans_CJK_SC',sans-serif] text-[23px] leading-[33px] font-light whitespace-nowrap text-[#0f0f0f]">
              <Mixed>上面代码和图示主演演示WeakHashMap如何自动释放缓存对象，当init函数执行完成后，局部变量字</Mixed>
              <Mixed>符串引用weakd1,weakd2,d1,d2都会消失，此时只有静态map中保存中对字符串对象的引用，可以</Mixed>
              <Mixed>看到，调用gc之后，HashMap的没有被回收，而WeakHashMap里面的缓存被回收了。</Mixed>
            </div>
          </div>
          <div className="flex w-[23px] flex-col items-center border-l border-white bg-[#efefef] pt-[6px] pb-[5px]">
            <Chevron d="up" />
            <div className="mt-[501px] h-[135px] w-[19px] bg-[#cacaca]" />
            <Chevron d="down" className="mt-auto text-[#444]" />
          </div>
        </div>
        <div className="flex h-[20px] items-center border-t border-white bg-[#f0f0f0] pl-[5px]">
          <Chevron d="left" />
          <div className="ml-[4px] h-[19px] w-[995px] bg-[#cbcaca]" />
          <Chevron d="right" className="ml-[18px] text-[#444]" />
        </div>
      </div>
    </div>
  );
}

/* ---------- document tabs ---------- */

function DocIcon() {
  return (
    <svg width="18" height="20" viewBox="0 0 18 20" className="shrink-0"><path d="M2 1H13L17 5V19H2Z" fill="#f4f4f6" stroke="#9a9aa8" /><rect x=".5" y="6.500" width="9" height="8" fill="#3f4594" /><path d="M3 8.500V12.500M7 8.500V12.500M3 10.500H7" stroke="#fff" /><path d="M11 9H14.500V13H11ZM11 11H14.500" fill="none" stroke="#888" /></svg>
  );
}

function DocTabs() {
  return (
    <div className="flex h-[25px] shrink-0 border-t border-[#8f8f8f] bg-[#dadada]">
      <svg width="42" height="24" viewBox="0 0 42 24" className="shrink-0" fill="none" stroke="#777"><path d="M10.500 7.500V16.500L5.500 12Z" /><path d="M18 0L41 23" stroke="#999" /></svg>
      <div className="flex w-[278px] shrink-0 items-center bg-[#dfdfdf] pb-px pl-[10px] text-[14px] text-[#444]">
        <DocIcon />
        <span className="ml-[13px] whitespace-nowrap tracking-[0.250px]">第02章：JVM监控及诊断工具-命令行篇</span>
      </div>
      <svg width="24" height="24" viewBox="0 0 24 24" className="z-10 shrink-0"><path d="M0 0H24V24H23Z" fill="#ebebeb" /><path d="M0 0L23 23" stroke="#999" /></svg>
      <div className="flex w-[331px] shrink-0 items-center border-r border-[#999] bg-[#ebebeb] pb-px pl-[9px] text-[14px] font-bold text-[#235aa6]">
        <DocIcon />
        <span className="ml-[13px] whitespace-nowrap tracking-[0.500px]">第03章：JVM监控及诊断工具-GUI篇</span>
        <svg width="38" height="12" viewBox="0 0 38 12" className="mr-[7px] ml-auto shrink-0" fill="none" stroke="#555" strokeWidth="1.200"><path d="M5 8V1.500H12M7 4L12 9M12 5V9H8M28 1.500L37 10.500M37 1.500L28 10.500" /></svg>
      </div>
      <svg width="8" height="11" viewBox="0 0 8 11" className="my-auto mr-[30px] ml-auto" fill="none" stroke="#666"><path d="M1 1V10L7 5.500Z" /></svg>
    </div>
  );
}

/* ---------- taskbar ---------- */

const APPS = [
  { id: "view", svg: (<g><rect x="0" y="10" width="27" height="25" rx="1" fill="#262626" /><rect x="9" y="0" width="27" height="25" rx="1" fill="#fff" opacity=".82" /><rect x="9" y="10" width="18" height="15" fill="#bdbdbd" /></g>) },
  { id: "edge", svg: (<g><circle cx="18" cy="18" r="18" fill="url(#edgeA)" /><path d="M0 19C0 8 9 7 15 10C21 13 22 17 20 20C19 23 24 26 33 25C28 36 15 38 7 32C2 28 0 24 0 19Z" fill="#1b74c5" /><path d="M8 22C8 14 13 11 16 12C12 16 12 24 18 28C23 31 29 29 33 25C30 32 25 36 18 36C11 34 8 28 8 22Z" fill="#0d4a8f" /><path d="M17 17C19 19 19 20 18.500 22C18.500 25 25 27 36 23V27H32Q24 28 19 25Q15 22 17 17Z" fill="#e2e4e8" /></g>) },
  { id: "files", svg: (<g><path d="M0 2Q0 1 1 1H12L16 5V12H0Z" fill="#d89b1a" /><rect x="0" y="5" width="36" height="30" rx="2" fill="#f9c836" /><path d="M6 35V27Q6 23 10 23H26Q30 23 30 27V35Z" fill="#1c6fb4" /><path d="M12 29H24" stroke="#0e4a82" strokeWidth="2" /></g>) },
  { id: "wechat", svg: (<g><path d="M13 3C21 3 26 8 26 14C26 21 20 25 13 25L5 28L6 23C2 21 0 18 0 14C0 8 5 3 13 3Z" fill="#2fc465" /><circle cx="9" cy="11" r="1.800" fill="#176b37" /><circle cx="17" cy="11" r="1.800" fill="#176b37" /><path d="M26 13C32 13 36 17 36 21C36 24 34 26 33 27L33 30L29 28C21 29 16 25 16 21C16 16 20 13 26 13Z" fill="#ececec" /><circle cx="23" cy="20" r="1.300" fill="#888" /><circle cx="29" cy="20" r="1.300" fill="#888" /></g>) },
  { id: "red", svg: (<g><circle cx="18" cy="18" r="18" fill="#f8201f" /><path d="M8.500 14.500L7 23M13 14L12 21Q12 23 14 23M18 11L16 23M22 14L21 21Q21 23 25 22.500M26.500 14L24.500 26M30 14L29 21" stroke="#fff" strokeWidth="2.800" strokeLinecap="round" fill="none" /></g>) },
  { id: "rocket", dot: "w-[9px] bg-[#818488]", svg: (<g><circle cx="18" cy="18" r="14" fill="#b9d3f4" /><path d="M18 3C23 8 24 14 23 26H13C12 14 13 8 18 3Z" fill="#eef5ff" stroke="#3f7fdb" strokeWidth="1.500" /><path d="M13 16L7 22V29L13 25ZM23 16L29 22V29L23 25Z" fill="#4a8ae8" /><circle cx="18" cy="13" r="3" fill="none" stroke="#2f6fd0" strokeWidth="2" /><path d="M15 27H21L18 35Z" fill="#3f7fdb" /></g>) },
  { id: "clock", svg: (<g><path d="M28 2L32 1L35 6L32 8Z" fill="#555" /><path d="M0 18A18 18 0 0 1 36 18V33Q36 36 33 36H3Q0 36 0 33Z" fill="#6b7880" /><circle cx="18" cy="18" r="14" fill="#eef0f2" /><path d="M18 18V30" stroke="#c8502a" strokeWidth="2" /><path d="M9 12L18 18L24 11" fill="none" stroke="#2c3338" strokeWidth="3" /></g>) },
  { id: "wps", svg: (<g><path d="M2 5H24L22 10H9.500L13.500 22L19 10H24L15 32H11Q9 32 8 29L0 8Q0 5 2 5Z" fill="#e9281d" /><path d="M19 13L24 24L29.500 10H23.500L26 5H34Q37 5 36 8L28 30Q27 32 25 32H22L17 18Z" fill="#f2582e" /></g>) },
  { id: "xmind", svg: (<g><rect width="36" height="36" rx="4" fill="url(#xm)" /><path d="M17 6L23 9V14Q28 15 30 15V22Q22 22 19 17Q15 12 17 6Z" fill="#fff" /><path d="M19 30L13 27V22Q8 22 6 21V14Q14 14 17 19Q21 24 19 30Z" fill="#fbe9e4" /></g>) },
  { id: "ij", svg: (<g><path d="M2 2L8 0L10 10L0 20Z" fill="#f8b23c" /><path d="M8 6L20 0L26 6V20H8Z" fill="#e9318f" /><path d="M22 4L30 1L36 12L34 31L20 36L16 28Z" fill="#1f9bee" /><path d="M1 22L12 18L18 30L3 34Z" fill="#d63bd0" /><rect x="7" y="7" width="22" height="22" fill="#0c0c10" /><text x="9" y="18" fontSize="11" fontWeight="700" fontFamily="Liberation Mono, monospace" fill="#fff">IJ</text><path d="M10 25.500H18" stroke="#fff" strokeWidth="1.600" /></g>) },
  { id: "eclipse", svg: (<g><circle cx="16" cy="18" r="16" fill="#f3a43a" /><circle cx="20" cy="18" r="16" fill="#2c2255" /><path d="M4 13.500H36M4 18H36M4 22.500H36" stroke="#e9e8f2" strokeWidth="2.200" /></g>) },
  { id: "bili", dot: "w-[9px] bg-[#818488]", svg: (<g><rect width="36" height="36" rx="7" fill="#fb4586" /><rect x="5" y="9" width="26" height="20" rx="5" fill="none" stroke="#ff8ab2" strokeWidth="2" /><path d="M12 5L15 9M24 5L21 9" stroke="#ff8ab2" strokeWidth="2" /><text x="18" y="24" textAnchor="middle" fontSize="12.500" fontWeight="700" letterSpacing="-.9" fill="#fff">bilibili</text></g>) },
  { id: "snip", active: true, dot: "w-[24px] bg-[#5f7480]", svg: (<g><rect x="3" y="5" width="15" height="15" fill="#f0f0f0" /><path d="M2 5H18" stroke="#cf4a1a" strokeWidth="4" strokeDasharray="4 2" /><path d="M4 9V20" stroke="#cf4a1a" strokeWidth="4" strokeDasharray="4 2" /><path d="M20 7V26M8 21H28" stroke="#8a949c" strokeWidth="3.500" /><circle cx="31" cy="19" r="3.200" fill="#fff" stroke="#2c9ad8" strokeWidth="2.600" /><circle cx="18" cy="32" r="3.200" fill="#fff" stroke="#2c9ad8" strokeWidth="2.600" /></g>) },
];

function Taskbar() {
  return (
    <footer className="flex h-[71px] shrink-0 items-center bg-linear-to-r from-[#e2e3e6] via-[#dfe3e9] to-[#e5e4e6]">
      <svg width="0" height="0" className="absolute">
        <linearGradient id="win" x1="0" y1="0" x2="1" y2="1"><stop offset="0" stopColor="#3cc4f4" /><stop offset="1" stopColor="#0b6cc4" /></linearGradient>
        <linearGradient id="edgeA" x1="0" y1="0" x2="1" y2=".6"><stop offset="0" stopColor="#2aa9d8" /><stop offset="1" stopColor="#57cf6a" /></linearGradient>
        <linearGradient id="xm" x1="1" y1="0" x2="0" y2="1"><stop offset="0" stopColor="#cf7238" /><stop offset="1" stopColor="#e01e10" /></linearGradient>
      </svg>
      <svg width="35" height="35" viewBox="0 0 35 35" className="mt-px ml-[32px] shrink-0"><path d="M0 1Q0 0 1 0H17V17H0ZM18 0H34Q35 0 35 1V17H18ZM0 18H17V35H1Q0 35 0 34ZM18 18H35V34Q35 35 34 35H18Z" fill="url(#win)" /></svg>
      <div className="mt-px ml-[23px] flex h-[44px] w-[146px] shrink-0 items-center rounded-full bg-[#f8f8f8] pl-[41px] text-[18px] text-[#1e1e1e] shadow-sm">
        <svg width="22" height="22" viewBox="0 0 22 22" fill="none" stroke="#222" strokeWidth="2"><circle cx="13" cy="9" r="7" /><path d="M8 14.500L2 21" /></svg>
        <span className="ml-[7px]">搜索</span>
      </div>
      <div className="mt-px ml-[6px] flex">
        {APPS.map((a) => (
          <div key={a.id} className="flex w-[66px] justify-center">
            <div className={"relative flex h-[56px] w-[56px] items-center justify-center rounded-md " + (a.active ? "bg-[#f3f5f7] shadow" : "")}>
              <svg width="36" height="36" viewBox="0 0 36 36">{a.svg}</svg>
              {a.dot ? <div className={"absolute bottom-0 left-1/2 h-[5px] -translate-x-1/2 rounded-full " + a.dot} /> : null}
            </div>
          </div>
        ))}
      </div>
      <div className="ml-auto flex items-center pr-[30px] text-[#1c1c1c]">
        <svg width="20" height="12" viewBox="0 0 20 12" fill="none" stroke="#1c1c1c" strokeWidth="1.800"><path d="M1 11L10 2L19 11" /></svg>
        <div className="ml-[20px] text-[22px] leading-[28px]">英</div>
        <svg width="24" height="20" viewBox="0 0 24 20" className="ml-[26px]" fill="none" stroke="#1c1c1c" strokeWidth="1.800"><path d="M1 7Q12 -3 23 7" stroke="#aaa" /><path d="M4.500 10.500Q12 3.500 19.500 10.500M8 14Q12 10 16 14" /><circle cx="12" cy="16.500" r="2.200" fill="#1c1c1c" stroke="none" /></svg>
        <svg width="25" height="20" viewBox="0 0 25 20" className="ml-[12px]" fill="none" stroke="#1c1c1c" strokeWidth="1.600"><path d="M1 7H5L10 2V18L5 13H1ZM13.500 7Q15.500 10 13.500 13M17 4.500Q20.500 10 17 15.500M20.500 2Q25.500 10 20.500 18" /></svg>
        <svg width="25" height="20" viewBox="0 0 25 20" className="ml-[11px]" fill="none" stroke="#1c1c1c" strokeWidth="1.700"><path d="M12 4H19Q21 4 21 6V14Q21 16 19 16H6" /><path d="M9 6.500H18.500V13.500H8Z" fill="#1c1c1c" /><path d="M22.500 8V12" strokeWidth="2.500" /><path d="M1 3H8V7Q8 9 5.500 9H3.500Q1 9 1 7Z" fill="#1c1c1c" stroke="none" /><path d="M2.500 0V4M6.500 0V4M4.500 9V17" /></svg>
        <div className="ml-[16px] w-[86px] pb-[2px] text-right text-[16.500px] leading-[23px] whitespace-nowrap">
          <div className="tracking-[-0.500px]">21:28</div>
          <div className="tracking-[0.150px]">2023/4/15</div>
        </div>
        <svg width="20" height="22" viewBox="0 0 20 22" className="ml-[15px]" fill="none" stroke="#1c1c1c" strokeWidth="1.700"><path d="M9 1Q14 11 1 16Q6 22 12.500 19.500Q19 16.500 19 10Q18 2.500 9 1Z" strokeLinejoin="round" /></svg>
      </div>
    </footer>
  );
}

/* ---------- player overlays ---------- */

function Overlays() {
  return (
    <>
      <svg width="14" height="78" viewBox="0 0 14 78" className="absolute top-[175px] left-[1px]"><rect x="2.500" y="2" width="10" height="72" rx="5" fill="#f3f3f3" stroke="#666" strokeWidth="3" /><rect x="5" y="55" width="5" height="17" rx="2" fill="#4f9ef0" /></svg>
      <div className="absolute top-[501px] left-[1880px] flex h-[78px] w-[40px] items-center justify-center rounded-l-lg bg-[#5d5f5e]/90 pr-[2px]">
        <svg width="14" height="22" viewBox="0 0 14 22"><path d="M11 2L3 11L11 20" fill="none" stroke="#fff" strokeWidth="3.600" strokeLinecap="round" /></svg>
      </div>
      <svg width="96" height="92" viewBox="0 0 96 92" className="absolute top-[828px] left-[1773px] opacity-85 drop-shadow-md">
        <path d="M33 10L41 21M71 10L63 21" stroke="#fff" strokeWidth="9" strokeLinecap="round" />
        <path fillRule="evenodd" d="M24 17H72Q88 17 88 33V66Q88 82 72 82H24Q8 82 8 66V33Q8 17 24 17ZM36 39V62Q37 67 42 64L60 54Q64 51 60 47L42 37Q37 34 36 39Z" fill="#fbfdfb" />
      </svg>
      <div className="absolute top-[980px] left-[18px] flex h-[3px] w-[1884px] bg-[#d3dae6]">
        <div className="w-[808px] bg-[#ea93b2]" />
        <div className="w-[970px] bg-[#da86a9]" />
      </div>
    </>
  );
}

export default function App() {
  return (
    <div className={"relative flex h-[1080px] w-[1920px] flex-col overflow-hidden bg-[#d9d9d9] " + UI}>
      <Header />
      <Ribbon />
      <main className="flex h-[808px] shrink-0 bg-[#dedede] pt-[2px] pb-[1px]">
        <MapPanel />
        <NotesPanel />
      </main>
      <DocTabs />
      <Taskbar />
      <Overlays />
    </div>
  );
}
